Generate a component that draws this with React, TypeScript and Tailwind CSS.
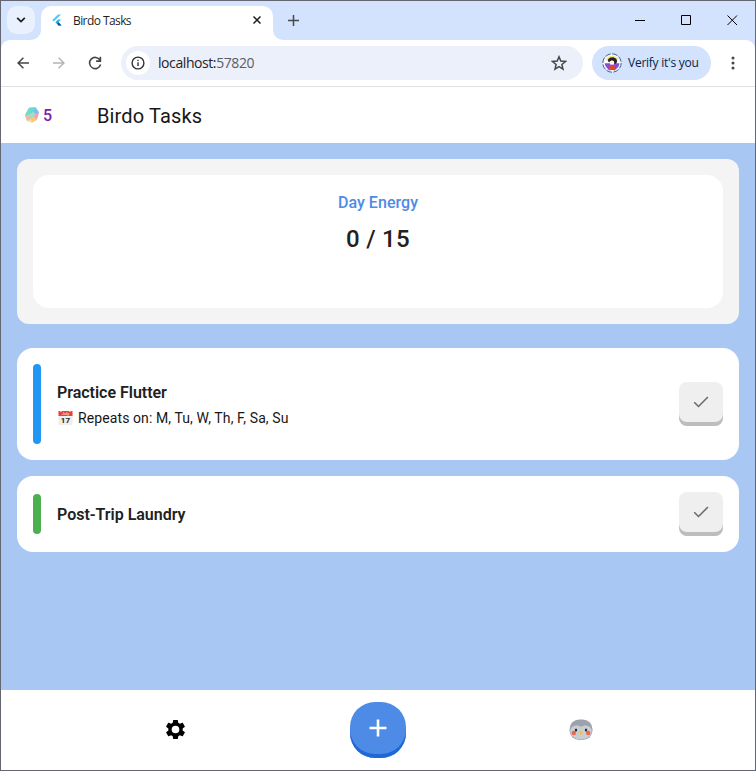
import React from "react";

const CHROME_FONT = "font-['Open_Sans','Noto_Sans',sans-serif]";

function BrowserTabs() {
  return (
    <div className="flex h-[39px] shrink-0 items-start bg-[#d3e2fd] pl-1.5 pt-[5px]">
      <div className="flex size-7 items-center justify-center rounded-[10px] bg-[#eaf1fe]">
        <svg width="10" height="6" viewBox="0 0 10 6" fill="none" stroke="#1f1f1f" strokeWidth="1.8">
          <path d="M1.2 .9 5 4.6 8.8 .9" />
        </svg>
      </div>
      <div className="relative ml-[6px] flex h-[34px] w-[232px] rounded-t-[10px] bg-white">
        <svg className="absolute -left-2.5 bottom-0" width="10" height="10">
          <path d="M10 0v10H0A10 10 0 0 0 10 0z" fill="white" />
        </svg>
        <svg className="absolute -right-2.5 bottom-0" width="10" height="10">
          <path d="M0 0v10h10A10 10 0 0 1 0 0z" fill="white" />
        </svg>
        <svg className="ml-[11px] mt-2" width="10" height="12" viewBox="0 0 22 24">
          <path d="M13.5 0H20L3.8 15.4 .6 11.9z" fill="#54c5f8" />
          <path d="M20 11h-6.6L7.7 16.8l6.7 7.1H21l-6.8-7.1z" fill="#29b6f6" />
          <path d="m7.6 16.8 3.3-3.3 3.4 3.3-3.4 3.5z" fill="#38a9ef" />
          <path d="m10.9 20.3 3.4-3.5 6.8 7.1h-6.7z" fill="#01579b" />
        </svg>
        <span className="ml-[11px] mt-[7px] w-[180px] whitespace-nowrap text-[12px] leading-4 tracking-[-0.58px] text-[#1f1f1f]">
          Birdo Tasks
        </span>
        <svg className="absolute left-[212px] top-[10px]" width="8" height="8" stroke="#1f1f1f" strokeWidth="1.5">
          <path d="m.5.5 7 7m0-7-7 7" />
        </svg>
      </div>
      <svg className="ml-[15px] mt-[9px]" width="11" height="11" stroke="#45484e" strokeWidth="1.5">
        <path d="M5.5 0v11M0 5.5h11" />
      </svg>
      <svg className="ml-auto mr-[17px] mt-[9px]" width="104" height="11" fill="none" stroke="#000" strokeWidth="1">
        <path d="M1 5.5h10M47.5.5h9v9h-9z" />
        <path d="m93.5 .5 9.5 9.5m0-9.5L93.5 10" />
      </svg>
    </div>
  );
}

function Avatar() {
  return (
    <svg width="20" height="20" viewBox="0 0 20 20">
      <circle cx="10" cy="10" r="9.2" fill="#eef5ff" stroke="#3f648e" strokeWidth="1" strokeDasharray="5.7 1.5" />
      <circle cx="10" cy="10" r="7.4" fill="#fff" />
      <path d="M3.8 6.4C6.6 1.4 13.4 1.4 16.2 6.3L14 8.5H6z" fill="#f6e873" />
      <path d="M2.7 10.2h14.6c0 8.4-13 9.9-14.6 0z" fill="#8a4bd0" />
      <path d="M6.4 8.9 6 6.3l2.4-1.9 3-.2 2.9 1.6.9 2.8-1.2 2.1-1.6.3-.5-2.9-2.6-.6-2 1.7z" fill="#242027" />
      <path d="m7.8 8.4 2-.8 2.1 1 .1 3-3.7.2z" fill="#fff6ec" />
      <path d="m8.2 12.3 3.4-.2 1.7 3.8-6.2.2z" fill="#e6471f" />
      <path d="M5 15.4c3.2 2.4 7 2.4 10 0l-2.2 1.8H7z" fill="#29202d" />
    </svg>
  );
}

function AddressBar() {
  return (
    <div className="h-[47px] shrink-0 bg-[#d3e2fd]">
      <div className="flex h-full items-center rounded-t-[9px] border-b border-[#dfe1e5] bg-white">
        <svg className="ml-4" width="12" height="12" fill="none" stroke="#474747" strokeWidth="1.5">
          <path d="M12 6H1M6.4.7 1.1 6l5.3 5.3" />
        </svg>
        <svg className="ml-6" width="12" height="12" fill="none" stroke="#b4b4b4" strokeWidth="1.5">
          <path d="M0 6h11M5.6.7 10.9 6l-5.3 5.3" />
        </svg>
        <svg className="ml-[23px]" width="14" height="14" fill="none" stroke="#474747" strokeWidth="1.6">
          <path d="M12 4.1a5.6 5.6 0 1 0 .6 4.4M12.4.8v4.3H8.1" />
        </svg>
        <div className="ml-[19px] flex h-[34px] w-[462px] items-center rounded-full bg-[#ebf0fa] pl-[5px] pr-4">
          <div className="flex size-6 items-center justify-center rounded-full bg-white">
            <svg width="14" height="14" fill="none" stroke="#303236" strokeWidth="1.4">
              <circle cx="7" cy="7" r="5.9" />
              <path d="M7 6.2V10M7 3.7v1.4" />
            </svg>
          </div>
          <span className="ml-2 text-[14px] leading-[18px] tracking-[-0.42px] text-[#1f2328]">
            localhost:<span className="text-[#595d63]">57820</span>
          </span>
          <svg className="ml-auto" width="16" height="16" fill="none" stroke="#474747" strokeWidth="1.5">
            <path d="m8 1.8 1.8 4.3 4.7.4-3.6 3 1.1 4.6L8 11.7l-4 2.4 1.1-4.6-3.6-3 4.7-.4z" />
          </svg>
        </div>
        <div className="ml-[9px] flex h-[34px] w-[119px] items-center rounded-full bg-[#d3e2fd] pl-[10px]">
          <Avatar />
          <span className="ml-1.5 whitespace-nowrap text-[12px] leading-4 tracking-[-0.25px] text-[#071e49]">Verify it's you</span>
        </div>
        <svg className="ml-5" width="4" height="14" fill="#474747">
          <circle cx="2" cy="2" r="1.5" /><circle cx="2" cy="7" r="1.5" /><circle cx="2" cy="12" r="1.5" />
        </svg>
      </div>
    </div>
  );
}

function Gem() {
  return (
    <svg width="16" height="16" viewBox="0 0 16 16">
      <path d="M5 .8 11.5.3 15 5.5l-2.2 7.2L8 15.6 3 14 1 8z" fill="#b9d3cf" />
      <path d="M5 .8 11.5.3 9 5 4.5 8z" fill="#62dcd8" />
      <path d="M5 .8 4.5 8 1 8z" fill="#6fe0ae" />
      <path d="m1 8 3.5 0L7 12l-4 2z" fill="#f6b7a0" />
      <path d="M11.5.3 15 5.5 11.5 7 9 5z" fill="#73c0ef" />
      <path d="m9 5 2.5 2L7 12 4.5 8z" fill="#a3dcc0" />
      <path d="m15 5.5-2.2 7.2L10 10l1.5-3z" fill="#f4a0a4" />
      <path d="m7 12 3-2 2.8 2.7L8 15.6z" fill="#fcc76d" />
      <path d="m3 14 4-2 1 3.6z" fill="#fae09a" />
    </svg>
  );
}

function CheckButton() {
  return (
    <button aria-label="Complete task" className="flex h-11 w-11 shrink-0 items-center justify-center rounded-lg bg-[#efefef] pb-1 shadow-[inset_0_-4px_0_#bdbdbd]">
      <svg width="20" height="20" viewBox="0 0 24 24" fill="none" stroke="#686868" strokeWidth="1.8">
        <path d="m3.9 12.3 5.1 5.1L20.3 6.1" />
      </svg>
    </button>
  );
}

function Task({ title, detail, large = false }: { title: string; detail?: string; large?: boolean }) {
  return (
    <div className={`flex w-full shrink-0 items-center rounded-2xl bg-white px-4 ${large ? "h-28" : "mt-4 h-[76px]"}`}>
      <div className={`w-2 rounded-full ${large ? "h-20 bg-[#2196f3]" : "h-10 bg-[#4caf50]"}`} />
      <div className={`ml-4 flex-1 ${large ? "pt-[3px]" : "pt-[2px]"}`}>
        <div className="text-[16px] font-semibold leading-6 tracking-[-0.02px] text-[#212121]">{title}</div>
        {detail && (
          <div className="mt-px flex h-6 items-center text-[14px] leading-5 tracking-[0.1px] text-[#171717]">
            <svg className="mr-[5px]" width="16" height="16">
              <rect x="1.5" y="1" width="14" height="14" rx=".6" fill="#eee" />
              <path d="M1.5 1h14v5h-14z" fill="#e84236" />
              <path d="M4 0v2M13 0v2" stroke="#fff" />
              <text x="8.5" y="4.8" textAnchor="middle" fontSize="4" fill="#fff" fontFamily="Roboto">July</text>
              <text x="8.5" y="13" textAnchor="middle" fontSize="8" fontWeight="700" fill="#222" fontFamily="Roboto">17</text>
            </svg>
            {detail}
          </div>
        )}
      </div>
      <CheckButton />
    </div>
  );
}

function Bird() {
  return (
    <svg width="24" height="22" viewBox="0 0 24 22">
      <rect x=".5" y=".5" width="23" height="20.5" rx="9.8" fill="#9ca1ab" />
      <path d="M1.3 12C1 6.8 8.5 4.8 12 8c3.5-3.2 11-1.2 10.7 4 0 5-4.2 8.4-10.7 8.4S1.3 17 1.3 12z" fill="#c9cdd4" />
      <circle cx="4.8" cy="14" r="2.2" fill="#f3644f" />
      <circle cx="19.2" cy="14" r="2.2" fill="#f3644f" />
      <ellipse cx="7" cy="11" rx="1.2" ry="1.5" fill="#25282f" />
      <ellipse cx="17" cy="11" rx="1.2" ry="1.5" fill="#25282f" />
      <path d="m12 11.5 1.8 2-1.8 2.6-1.8-2.6z" fill="#f5c52c" />
    </svg>
  );
}

function BottomBar() {
  return (
    <div className="flex h-20 shrink-0 items-center bg-white">
      <svg className="mb-px ml-[163px]" width="23" height="23" viewBox="0 0 24 24" fill="#000">
        <path d="M19.43 12.98c.04-.32.07-.64.07-.98s-.03-.66-.07-.98l2.11-1.65c.19-.15.24-.42.12-.64l-2-3.46c-.12-.22-.39-.3-.61-.22l-2.49 1c-.52-.4-1.08-.73-1.69-.98l-.38-2.65A.488.488 0 0 0 14 2h-4c-.25 0-.46.18-.49.42l-.38 2.65c-.61.25-1.17.59-1.69.98l-2.49-1c-.23-.09-.49 0-.61.22l-2 3.46c-.13.22-.07.49.12.64l2.11 1.65c-.04.32-.07.65-.07.98s.03.66.07.98l-2.11 1.65c-.19.15-.24.42-.12.64l2 3.46c.12.22.39.3.61.22l2.49-1c.52.4 1.08.73 1.69.98l.38 2.65c.03.24.24.42.49.42h4c.25 0 .46-.18.49-.42l.38-2.65c.61-.25 1.17-.59 1.69-.98l2.49 1c.23.09.49 0 .61-.22l2-3.46c.12-.22.07-.49-.12-.64l-2.11-1.65zM12 16a4 4 0 1 1 0-8 4 4 0 0 1 0 8z" />
      </svg>
      <button aria-label="Add task" className="ml-[163px] flex size-14 items-center justify-center rounded-[25px] bg-[#4d8be6] shadow-[inset_0_-4px_0_#2068d5]">
        <svg className="-mt-1" width="18" height="18" stroke="#fff" strokeWidth="2.6">
          <path d="M9 .5v17M.5 9h17" />
        </svg>
      </button>
      <div className="ml-[162.5px]"><Bird /></div>
    </div>
  );
}

export default function App() {
  return (
    <div className="flex h-[771px] w-[756px] flex-col overflow-hidden border border-[#646772] bg-white">
      <div className={CHROME_FONT}>
        <BrowserTabs />
        <AddressBar />
      </div>
      <div className="flex flex-1 flex-col font-[Roboto,sans-serif]">
        <header className="flex h-14 shrink-0 items-center bg-white pl-[23px]">
          <Gem />
          <span className="ml-[3px] w-[54px] pt-px text-[16px] font-medium leading-6 text-[#7b1fa2]">5</span>
          <h1 className="pt-px text-[20px] font-normal leading-7 tracking-[0.15px] text-[#171717]">Birdo Tasks</h1>
        </header>
        <main className="flex flex-1 flex-col bg-[#a8c7f2] px-4 pt-4">
          <section className="h-[165px] shrink-0 rounded-xl bg-[#f4f4f4] p-4">
            <div className="h-[133px] rounded-2xl bg-white pt-4 text-center">
              <div className="text-[16px] font-medium leading-6 tracking-[0.05px] text-[#4d8be6]">Day Energy</div>
              <div className="mt-2 text-[24px] font-medium leading-8 tracking-[0.3px] text-[#212121]">0 / 15</div>
            </div>
          </section>
          <section className="mt-6 flex flex-col">
            <Task large title="Practice Flutter" detail="Repeats on: M, Tu, W, Th, F, Sa, Su" />
            <Task title="Post-Trip Laundry" />
          </section>
        </main>
        <BottomBar />
      </div>
    </div>
  );
}
